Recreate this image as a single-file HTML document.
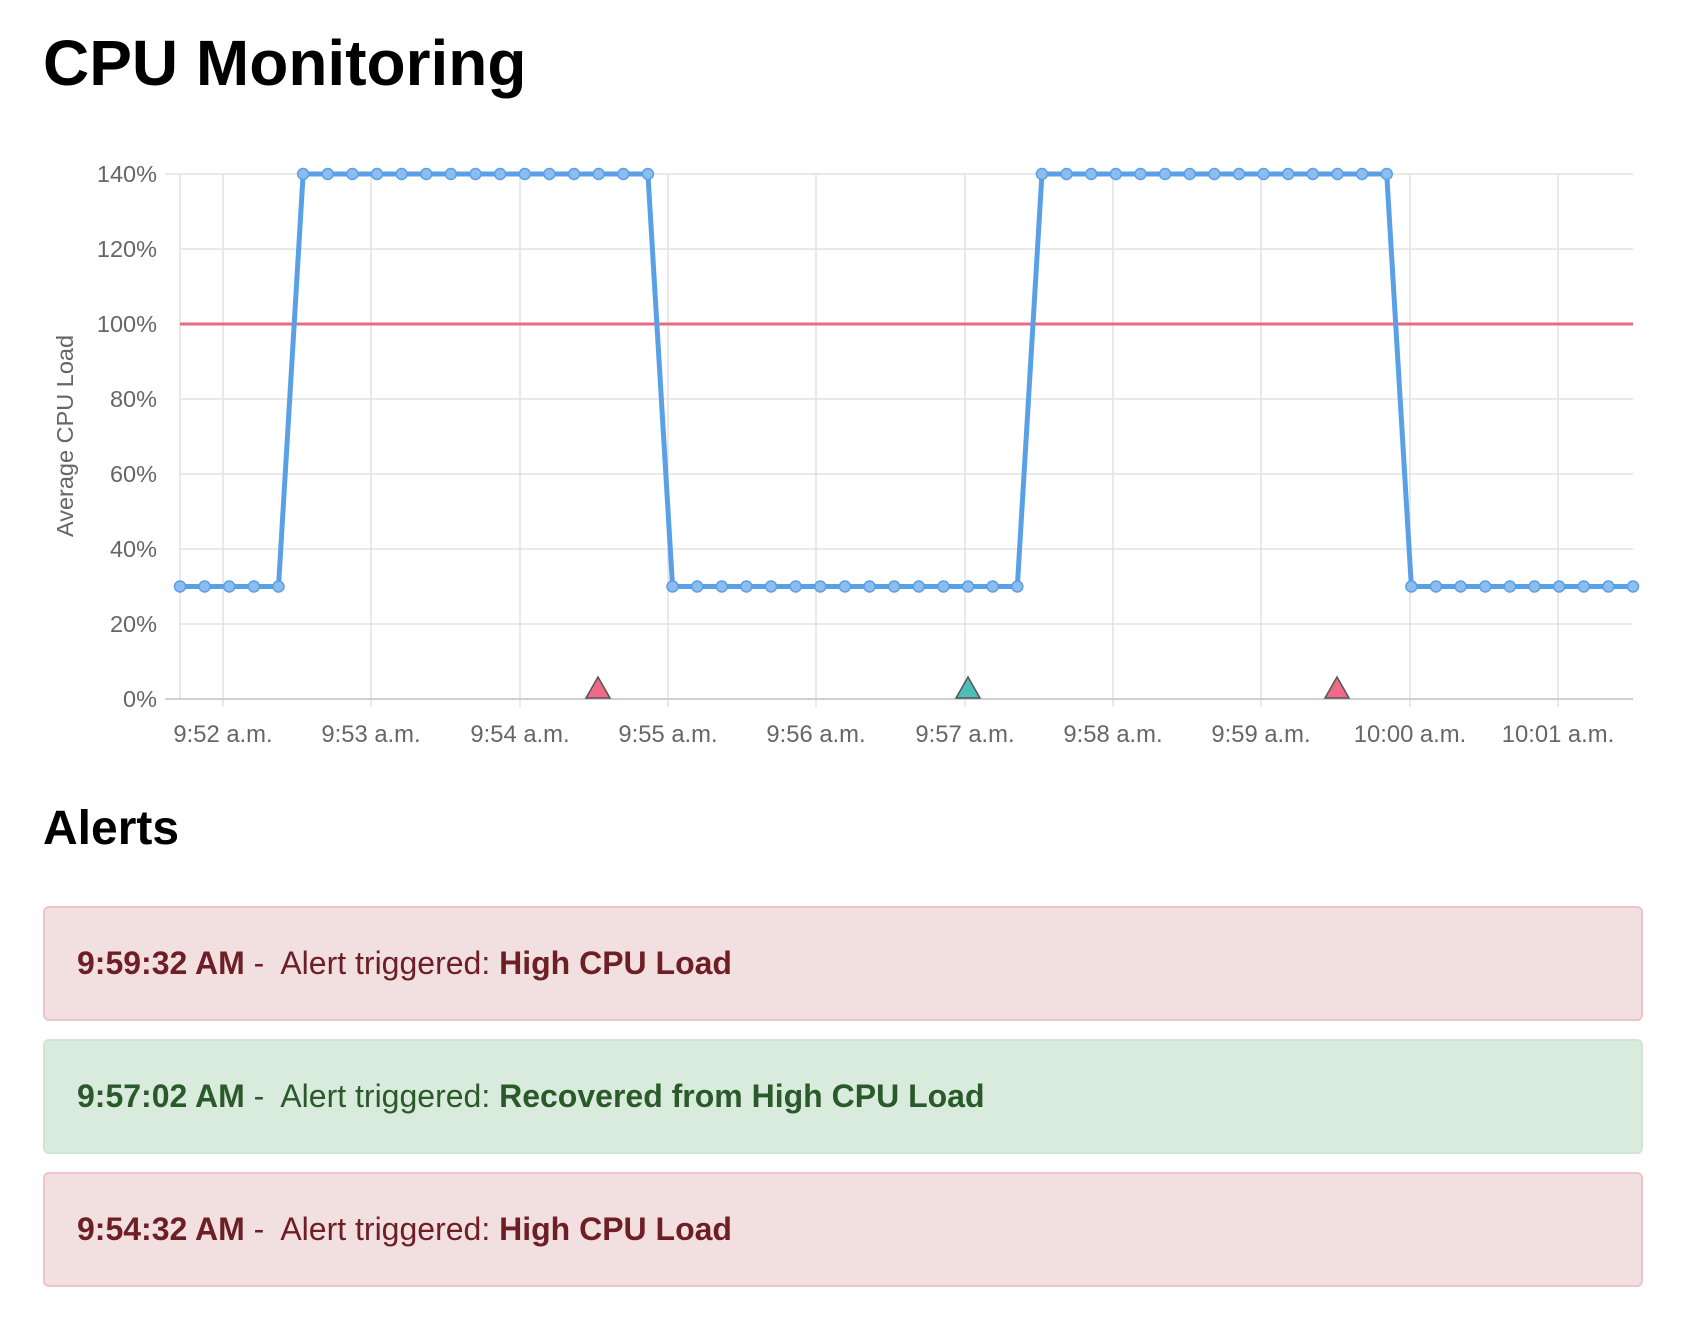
<!DOCTYPE html>
<html><head><meta charset="utf-8"><style>
body{margin:0;background:#fff;width:1688px;height:1344px;overflow:hidden;font-family:"Liberation Sans",Arial,sans-serif;position:relative}
h1{position:absolute;left:43px;top:25px;margin:0;font-size:64px;font-weight:bold;line-height:1.2}
h2{position:absolute;left:43px;top:800px;margin:0;font-size:48px;font-weight:bold;line-height:1.2}
.al{position:absolute;left:43px;width:1600px;height:115px;box-sizing:border-box;border:2px solid;border-radius:6px;font-size:32px;line-height:111px;padding-left:32px;white-space:pre}
.r{background:#f2dfe0;border-color:#ebc5ca;color:#6d1f25}
.g{background:#d9ebdc;border-color:#cfe5d3;color:#2a5a2a}
</style></head><body>
<h1>CPU Monitoring</h1>
<svg width="1688" height="780" style="position:absolute;left:0;top:0" font-family="Liberation Sans, Arial, sans-serif">
<g stroke="#e2e2e2" stroke-width="1.5">
<line x1="180" y1="174" x2="1633" y2="174"/><line x1="180" y1="249" x2="1633" y2="249"/>
<line x1="180" y1="324" x2="1633" y2="324"/><line x1="180" y1="399" x2="1633" y2="399"/>
<line x1="180" y1="474" x2="1633" y2="474"/><line x1="180" y1="549" x2="1633" y2="549"/>
<line x1="180" y1="624" x2="1633" y2="624"/>
<line x1="165" y1="174" x2="180" y2="174"/>
<line x1="180" y1="174" x2="180" y2="699"/>
<line x1="223" y1="174" x2="223" y2="707"/><line x1="371" y1="174" x2="371" y2="707"/>
<line x1="520" y1="174" x2="520" y2="707"/><line x1="668" y1="174" x2="668" y2="707"/>
<line x1="816" y1="174" x2="816" y2="707"/><line x1="965" y1="174" x2="965" y2="707"/>
<line x1="1113" y1="174" x2="1113" y2="707"/><line x1="1261" y1="174" x2="1261" y2="707"/>
<line x1="1410" y1="174" x2="1410" y2="707"/><line x1="1558" y1="174" x2="1558" y2="707"/>
</g>
<line x1="165" y1="699" x2="1633" y2="699" stroke="#cfcfcf" stroke-width="2"/>
<g fill="#666" font-size="23.5" text-anchor="end">
<text x="157" y="182">140%</text><text x="157" y="257">120%</text><text x="157" y="332">100%</text>
<text x="157" y="407">80%</text><text x="157" y="482">60%</text><text x="157" y="557">40%</text>
<text x="157" y="632">20%</text><text x="157" y="707">0%</text>
</g>
<g fill="#666" font-size="23.8" text-anchor="middle">
<text x="223" y="742">9:52 a.m.</text><text x="371" y="742">9:53 a.m.</text><text x="520" y="742">9:54 a.m.</text>
<text x="668" y="742">9:55 a.m.</text><text x="816" y="742">9:56 a.m.</text><text x="965" y="742">9:57 a.m.</text>
<text x="1113" y="742">9:58 a.m.</text><text x="1261" y="742">9:59 a.m.</text><text x="1410" y="742">10:00 a.m.</text>
<text x="1558" y="742">10:01 a.m.</text>
</g>
<text transform="translate(73,436) rotate(-90)" fill="#666" font-size="23.5" text-anchor="middle">Average CPU Load</text>
<line x1="180" y1="324" x2="1633" y2="324" stroke="#ea6a84" stroke-width="3"/>
<g id="ln"></g>
<polygon points="598,677 586,698 610,698" fill="#ee6a86" stroke="#555" stroke-width="1.5"/>
<polygon points="968,677 956,698 980,698" fill="#4fbdbb" stroke="#555" stroke-width="1.5"/>
<polygon points="1337,677 1325,698 1349,698" fill="#ee6a86" stroke="#555" stroke-width="1.5"/>
</svg>
<script>
var g=document.getElementById('ln'),ns='http://www.w3.org/2000/svg',pts=[],s='';
for(var i=0;i<60;i++){var v=(i<5||(i>=20&&i<35)||i>=50)?30:140;var x=180+i*1453/59,y=699-v/140*525;pts.push([x,y]);s+=x+','+y+' ';}
var p=document.createElementNS(ns,'polyline');p.setAttribute('points',s);p.setAttribute('fill','none');p.setAttribute('stroke','#5aa0e6');p.setAttribute('stroke-width','5');p.setAttribute('stroke-linejoin','round');g.appendChild(p);
pts.forEach(function(q){var c=document.createElementNS(ns,'circle');c.setAttribute('cx',q[0]);c.setAttribute('cy',q[1]);c.setAttribute('r','5.5');c.setAttribute('fill','#8cbdee');c.setAttribute('stroke','#5aa0e6');c.setAttribute('stroke-width','1.5');g.appendChild(c);});
</script>
<h2>Alerts</h2>
<div class="al r" style="top:906px"><b>9:59:32 AM</b> -  Alert triggered: <b>High CPU Load</b></div>
<div class="al g" style="top:1039px"><b>9:57:02 AM</b> -  Alert triggered: <b>Recovered from High CPU Load</b></div>
<div class="al r" style="top:1172px"><b>9:54:32 AM</b> -  Alert triggered: <b>High CPU Load</b></div>
</body></html>
